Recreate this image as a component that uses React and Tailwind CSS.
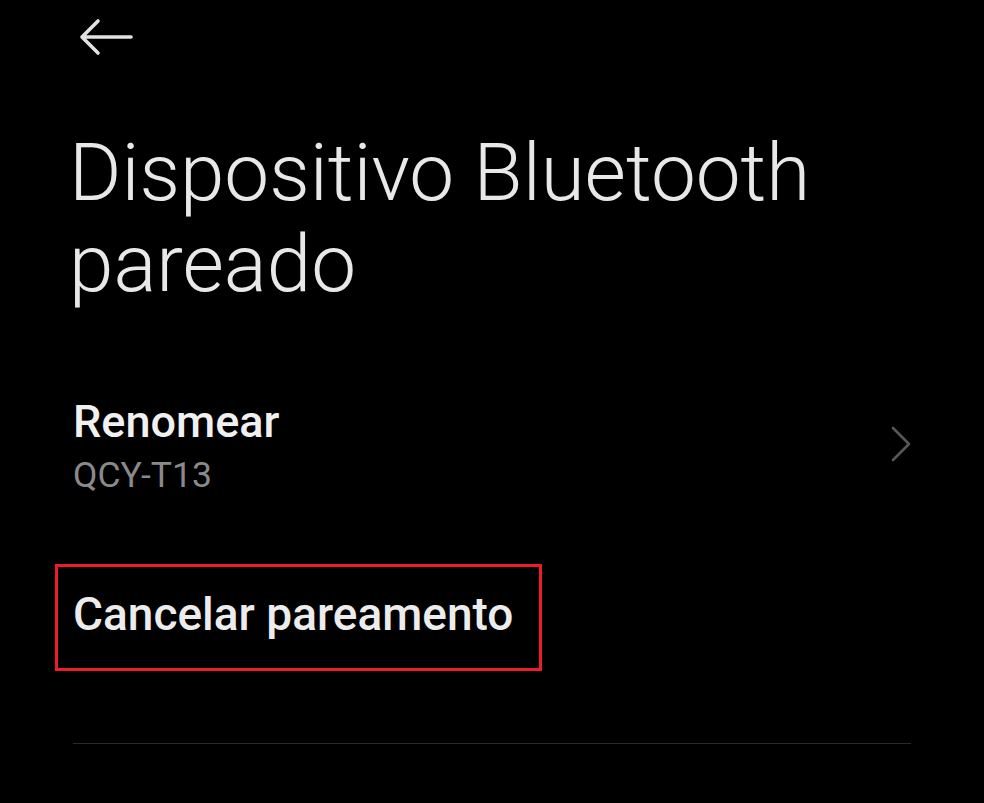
export default function App() {
  return (
    <div
      className="min-h-screen w-full bg-black text-[#ececec]"
      style={{ fontFamily: 'Roboto, "Noto Sans", sans-serif' }}
    >
      <div className="flex flex-col px-[73px]">
        {/* Back arrow */}
        <div className="pt-[18px] ml-[5px]">
          <svg width="56" height="38" viewBox="0 0 56 38" fill="none">
            <path
              d="M53 19H4M20 3L4 19l16 16"
              stroke="#e2e2e2"
              strokeWidth="3.6"
              strokeLinecap="round"
              strokeLinejoin="round"
            />
          </svg>
        </div>

        {/* Title */}
        <h1 className="mt-[72px] -ml-[4px] text-[80px] font-light leading-[91px] text-[#e8e8e8]">
          Dispositivo Bluetooth
          <br />
          pareado
        </h1>

        {/* Rename row */}
        <div className="mt-[89px] flex items-center justify-between">
          <div className="flex flex-col">
            <span className="text-[45px] font-medium leading-none text-[#f0f0f0]">Renomear</span>
            <span className="mt-[14px] text-[35.5px] leading-none text-[#8a8a8a]">QCY-T13</span>
          </div>
          <svg width="22" height="38" viewBox="0 0 22 38" fill="none" className="-mr-[1px] -mt-[4px]">
            <path
              d="M3 3l16 16L3 35"
              stroke="#575757"
              strokeWidth="2.6"
              strokeLinecap="round"
              strokeLinejoin="round"
            />
          </svg>
        </div>

        {/* Unpair */}
        <div className="mt-[70px] -ml-[18px] flex h-[107px] w-[487px] items-start border-[3px] border-[#ee1c2a] pl-[15px] pt-[24px]">
          <span className="text-[46px] font-medium leading-none text-[#ececec]">Cancelar pareamento</span>
        </div>

        <div className="mt-[72px] h-[1px] w-full bg-[#2a2a2a]" />
      </div>
    </div>
  );
}
